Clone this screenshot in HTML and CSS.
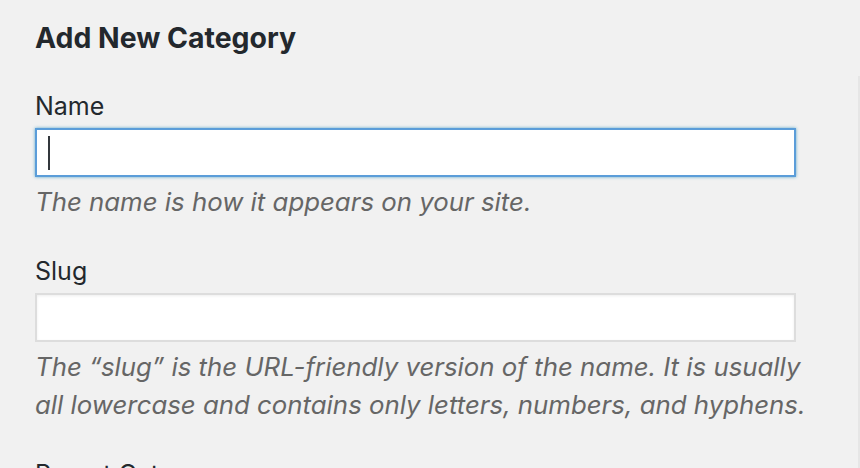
FILE: index.html
```html
<!DOCTYPE html>
<html lang="en">
<head>
<meta charset="utf-8">
<title>Add New Category</title>
<link rel="stylesheet" href="styles.css">
</head>
<body>
<div class="page">
  <form class="form-col">
    <h2 class="title">Add New Category</h2>
    <div class="field">
      <label class="label" for="tag-name">Name</label>
      <div class="input-wrap">
        <input class="text-input is-focused" id="tag-name" type="text">
        <span class="caret"></span>
      </div>
      <p class="help">The name is how it appears on your site.</p>
    </div>
    <div class="field">
      <label class="label" for="tag-slug">Slug</label>
      <div class="input-wrap">
        <input class="text-input" id="tag-slug" type="text">
      </div>
      <p class="help">The “slug” is the URL-friendly version of the name. It is usually all lowercase and contains only letters, numbers, and hyphens.</p>
    </div>
    <div class="field">
      <label class="label" for="parent">Parent Category</label>
    </div>
  </form>
  <div class="edge"></div>
</div>
</body>
</html>
```

FILE: styles.css
```css
html, body {
  margin: 0;
  padding: 0;
  background: #f1f1f1;
  height: 100%;
  overflow: hidden;
}
body {
  font-family: Inter, "Liberation Sans", sans-serif;
  color: #23282d;
}
.page {
  display: flex;
  height: 468px;
}
.form-col {
  flex: 1;
  padding: 0 0 0 35px;
  box-sizing: border-box;
  width: 858px;
}
.edge {
  width: 2px;
  margin-top: 76px;
  background: #e6e6e6;
}
.title {
  margin: 18px 0 30px;
  font-size: 28.4px;
  line-height: 40px;
  font-weight: 700;
}
.field {
  width: 790px;
}
.label {
  display: block;
  font-size: 25px;
  line-height: 36px;
}
.input-wrap {
  position: relative;
  margin-top: 4px;
  width: 761px;
}
.text-input {
  display: block;
  box-sizing: border-box;
  width: 761px;
  height: 49px;
  margin: 0;
  border: 2px solid #dddddd;
  background: #ffffff;
  box-shadow: inset 0 1px 3px rgba(0,0,0,0.07);
  outline: none;
  font: inherit;
}
.text-input.is-focused {
  border-color: #5b9dd9;
  box-shadow: 0 0 3px rgba(30,140,190,0.7);
}
.caret {
  position: absolute;
  left: 13px;
  top: 8px;
  width: 2px;
  height: 34px;
  background: #32373c;
}
.help {
  margin: 6px 0 32px;
  font-size: 25.8px;
  line-height: 38px;
  font-style: italic;
  color: #666666;
}
```
